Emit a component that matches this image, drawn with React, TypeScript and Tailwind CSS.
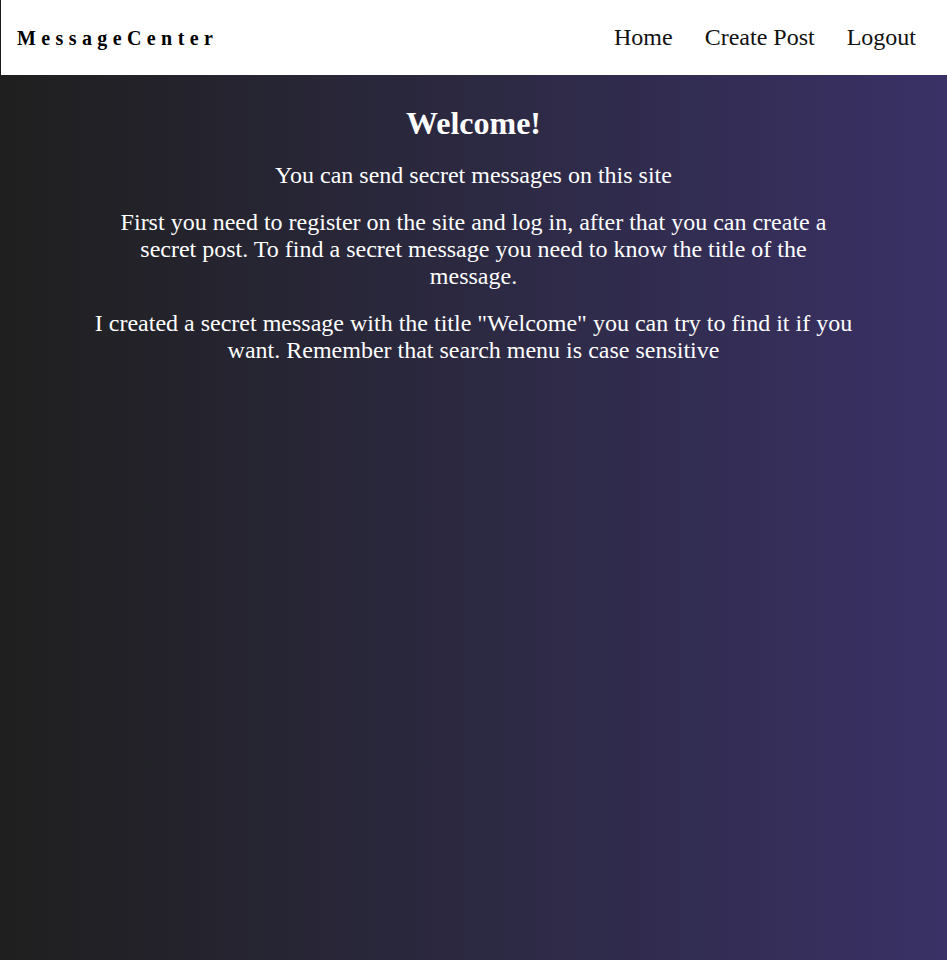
export default function App() {
  const links = ["Home", "Create Post", "Logout"];
  return (
    <div className="flex min-h-screen flex-col font-['Liberation_Serif',serif] leading-[normal]">
      <header className="flex h-[75px] items-center justify-between border-l border-[#1a1a1a] bg-white pl-[16px] pr-[31px]">
        <span className="pt-[1px] text-[20px] font-bold tracking-[5.4px] text-black">
          MessageCenter
        </span>
        <nav className="flex items-center gap-[32px] pb-[1px] text-[24px] text-[#111]">
          {links.map((link) => (
            <a key={link} href="#">
              {link}
            </a>
          ))}
        </nav>
      </header>
      <main className="flex-1 bg-linear-to-r from-[#1f1f1f] to-[#3a3166] pt-[30px]">
        <div className="mx-auto flex w-[80%] flex-col gap-5 text-center text-white">
          <h1 className="text-[32px] font-bold">Welcome!</h1>
          <p className="text-[24px]">You can send secret messages on this site</p>
          <p className="text-[24px]">
            First you need to register on the site and log in, after that you can
            create a secret post. To find a secret message you need to know the
            title of the message.
          </p>
          <p className="text-[24px]">
            I created a secret message with the title "Welcome" you can try to
            find it if you want. Remember that search menu is case sensitive
          </p>
        </div>
      </main>
    </div>
  );
}
